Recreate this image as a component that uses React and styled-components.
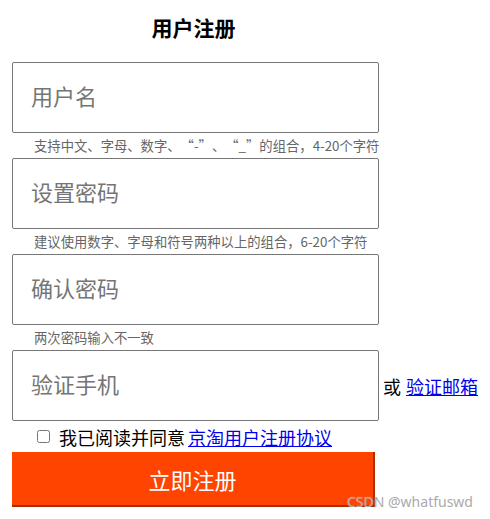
import React from "react";
import styled, { createGlobalStyle } from "styled-components";

const Global = createGlobalStyle`
  html, body { margin: 0; padding: 0; background: #fff; }
  body { font-family: "Noto Sans CJK SC", "Noto Sans", sans-serif; color: #000; }
  * { box-sizing: border-box; }
`;

const Page = styled.div`
  position: relative;
  width: 490px;
  height: 519px;
  padding: 0 0 0 12px;
  overflow: hidden;
`;

const Title = styled.h3`
  margin: 0;
  width: 363px;
  padding-top: 12px;
  height: 62px;
  line-height: 30px;
  text-align: center;
  font-size: 21px;
  font-weight: bold;
`;

const Row = styled.div`
  display: flex;
  align-items: center;
`;

const Input = styled.input`
  width: 367px;
  height: 71px;
  border: 1px solid #767676;
  border-radius: 2px;
  padding: 0 18px 6px;
  font-family: inherit;
  font-size: 22px;
  outline: none;
  &::placeholder { color: #757575; }
`;

const Hint = styled.div`
  height: 25px;
  line-height: 25px;
  padding-left: 22px;
  font-size: 13.33px;
  color: #666;
  white-space: nowrap;
`;

const Quote = styled.span`
  display: inline-block;
  width: 1em;
  text-align: ${(p) => (p.$open ? "right" : "left")};
`;

const Or = styled.span`
  margin-left: 4px;
  font-size: 18px;
  a { color: #0000ee; margin-left: 5px; }
`;

const Agree = styled.label`
  display: flex;
  align-items: center;
  height: 31px;
  font-size: 18px;
  a { color: #0000ee; margin-left: 3px; }
`;

const Check = styled.input`
  width: 13px;
  height: 13px;
  margin: 0 9px 0 25px;
`;

const Submit = styled.button`
  width: 363px;
  height: 55px;
  background: #ff4400;
  border: 2px outset #ff4400;
  border-top-width: 0;
  border-left-width: 0;
  color: #fff;
  font-family: inherit;
  font-size: 22px;
  padding: 0;
`;

const Watermark = styled.div`
  position: absolute;
  left: 347px;
  top: 492px;
  font-family: "Noto Sans", sans-serif;
  font-size: 14px;
  color: #aaa;
  text-shadow: 0 0 1px rgba(255,255,255,0.6);
  white-space: nowrap;
`;

const fields = [
  {
    ph: "用户名",
    hint: (
      <>
        支持中文、字母、数字、<Quote $open>“</Quote>-<Quote>”</Quote>、<Quote $open>“</Quote>_<Quote>”</Quote>的组合，4-20个字符
      </>
    ),
  },
  { ph: "设置密码", hint: "建议使用数字、字母和符号两种以上的组合，6-20个字符" },
  { ph: "确认密码", hint: "两次密码输入不一致" },
];

export default function App() {
  return (
    <Page>
      <Global />
      <Title>用户注册</Title>
      {fields.map((f) => (
        <div key={f.ph}>
          <Row><Input placeholder={f.ph} /></Row>
          <Hint>{f.hint}</Hint>
        </div>
      ))}
      <Row>
        <Input placeholder="验证手机" />
        <Or>或<a href="#">验证邮箱</a></Or>
      </Row>
      <Agree>
        <Check type="checkbox" />
        我已阅读并同意<a href="#">京淘用户注册协议</a>
      </Agree>
      <Submit>立即注册</Submit>
      <Watermark>CSDN @whatfuswd</Watermark>
    </Page>
  );
}
